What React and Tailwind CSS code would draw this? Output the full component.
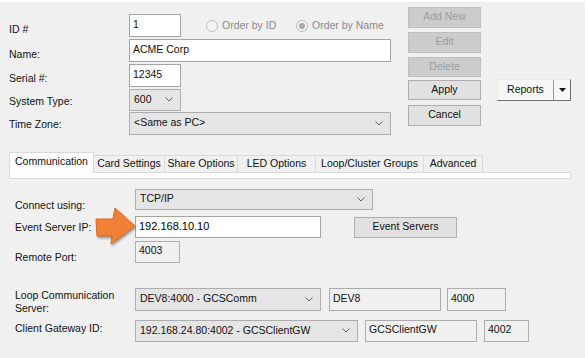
const Chevron = () => (
  <svg width="8" height="5" viewBox="0 0 8 5" className="shrink-0">
    <polyline points="0.5,0.5 4,4 7.5,0.5" fill="none" stroke="#606060" strokeWidth="1" />
  </svg>
);

const Select = ({ className, children }) => (
  <div className={`flex items-center justify-between border border-[#adadad] bg-[#e5e5e5] pl-[4px] pr-[7px] pb-[1px] ${className}`}>
    <span className="whitespace-nowrap">{children}</span>
    <Chevron />
  </div>
);

const Input = ({ className, ro, children }) => (
  <div
    className={`flex items-center border pl-[3px] pb-[2px] whitespace-nowrap ${
      ro ? "bg-[#f0f0f0] border-[#adadad]" : "bg-white border-[#a5a5a5]"
    } ${className}`}
  >
    {children}
  </div>
);

const Btn = ({ className, disabled, children }) => (
  <div
    className={`flex items-center justify-center border pb-[1px] ${
      disabled ? "bg-[#cccccc] border-[#bfbfbf] text-[#9d9d9d]" : "bg-[#e1e1e1] border-[#adadad] text-[#111]"
    } ${className}`}
  >
    {children}
  </div>
);

const Radio = ({ checked, label, className }) => (
  <div className={`flex items-center text-[#8a8a8a] ${className}`}>
    <div className="w-[12px] h-[12px] rounded-full border border-[#bcbcbc] bg-[#f4f4f4] flex items-center justify-center">
      {checked && <div className="w-[6px] h-[6px] rounded-full bg-[#a9a9a9]" />}
    </div>
    <span className="ml-[4px]">{label}</span>
  </div>
);

const Label = ({ className, children }) => (
  <div className={`w-[120px] shrink-0 leading-[13px] ${className}`}>{children}</div>
);

export default function App() {
  const tabs = [
    ["Card Settings", "w-[71px]"],
    ["Share Options", "w-[73px]"],
    ["LED Options", "w-[78px]"],
    ["Loop/Cluster Groups", "w-[108px]"],
    ["Advanced", "w-[59px]"],
  ];

  return (
    <div className="relative w-[588px] h-[358px] overflow-hidden bg-[#f0f0f0] border-t-2 border-r-[3px] border-white text-[10.5px] text-[#111] font-['Liberation_Sans',Arial,sans-serif]">
      {/* top form */}
      <div className="flex items-start">
        <div className="w-[391px] shrink-0 pl-[9px] mt-[12px]">
          <div className="flex items-center h-[23px]">
            <Label className="pt-[8px]">ID #</Label>
            <Input className="w-[52px] h-[23px]">1</Input>
            <Radio className="ml-[25px] w-[90px]" label="Order by ID" />
            <Radio checked label="Order by Name" />
          </div>
          <div className="flex items-center h-[23px] mt-[2px]">
            <Label className="pt-[8px]">Name:</Label>
            <Input className="w-[262px] h-[23px]">ACME Corp</Input>
          </div>
          <div className="flex items-center h-[23px] mt-[2px]">
            <Label className="pt-[6px]">Serial #:</Label>
            <Input className="w-[52px] h-[23px]">12345</Input>
          </div>
          <div className="flex items-center h-[22px] mt-[2px]">
            <Label className="pt-[2px]">System Type:</Label>
            <Select className="w-[52px] h-[22px]">600</Select>
          </div>
          <div className="flex items-center h-[23px] mt-[1px]">
            <Label className="pt-[2px]">Time Zone:</Label>
            <Select className="w-[262px] h-[23px]">&lt;Same as PC&gt;</Select>
          </div>
        </div>

        <div className="ml-[17px] mt-[5px] flex flex-col w-[73px]">
          <Btn disabled className="h-[21px]">Add New</Btn>
          <Btn disabled className="h-[21px] mt-[4px]">Edit</Btn>
          <Btn disabled className="h-[20px] mt-[4px]">Delete</Btn>
          <Btn className="h-[20px] mt-[3px]">Apply</Btn>
          <Btn className="h-[21px] mt-[5px]">Cancel</Btn>
        </div>

        <div className="ml-[16px] mt-[77px] flex w-[74px] h-[22px] bg-[#f7f7f7] border border-t-[#e8e8e8] border-l-[#e8e8e8] border-r-[#6f6f6f] border-b-[#6f6f6f]">
          <div className="w-[56px] flex items-center justify-center pb-[1px] border-r border-[#9a9a9a]">Reports</div>
          <div className="flex-1 flex items-center justify-center">
            <svg width="7" height="4" viewBox="0 0 7 4">
              <polygon points="0,0 7,0 3.5,4" fill="#111" />
            </svg>
          </div>
        </div>
      </div>

      {/* tabs */}
      <div className="ml-[9px] mt-[17px] w-[562px] flex items-end h-[21px]">
        <div className="w-[85px] h-[21px] bg-white border-l border-t border-r border-[#d9d9d9] flex items-center justify-center pb-[2px]">
          Communication
        </div>
        {tabs.map(([t, w]) => (
          <div
            key={t}
            className={`${w} h-[18px] border-t border-r border-b border-[#d9d9d9] flex items-center justify-center pb-[1px] whitespace-nowrap`}
          >
            {t}
          </div>
        ))}
        <div className="flex-1 border-b border-[#d9d9d9]" />
      </div>
      <div className="ml-[9px] w-[562px] h-[6px] bg-white border-x border-b border-[#d9d9d9]" />

      {/* communication page */}
      <div className="pl-[15px]">
        <div className="flex items-start h-[21px] mt-[10px]">
          <Label className="w-[118px] mt-[10px]">Connect using:</Label>
          <Select className="w-[238px] h-[21px]">TCP/IP</Select>
        </div>
        <div className="flex items-start h-[22px] mt-[6px]">
          <Label className="w-[118px] mt-[5px]">Event Server IP:</Label>
          <Input className="w-[186px] h-[22px] text-[11px] text-black">192.168.10.10</Input>
          <Btn className="ml-[33px] mt-[1px] w-[103px] h-[21px]">Event Servers</Btn>
        </div>
        <div className="flex items-start h-[22px] mt-[3px]">
          <Label className="w-[118px] mt-[10px]">Remote Port:</Label>
          <Input ro className="w-[45px] h-[22px]">4003</Input>
        </div>
        <div className="flex items-start h-[23px] mt-[25px]">
          <Label className="w-[118px] mt-[1px]">
            Loop Communication
            <br />
            Server:
          </Label>
          <Select className="w-[186px] h-[23px]">DEV8:4000 - GCSComm</Select>
          <Input ro className="ml-[8px] w-[112px] h-[23px]">DEV8</Input>
          <Input ro className="ml-[6px] w-[59px] h-[23px]">4000</Input>
        </div>
        <div className="flex items-start h-[22px] mt-[9px]">
          <Label className="w-[118px] mt-[2px]">Client Gateway ID:</Label>
          <Select className="w-[223px] h-[22px]">192.168.24.80:4002 - GCSClientGW</Select>
          <Input ro className="ml-[7px] w-[112px] h-[22px]">GCSClientGW</Input>
          <Input ro className="ml-[7px] w-[45px] h-[22px]">4002</Input>
        </div>
      </div>

      {/* orange callout arrow */}
      <svg
        width="50"
        height="46"
        viewBox="0 0 50 46"
        className="absolute left-[90px] top-[201px] drop-shadow-[1px_2px_1px_rgba(0,0,0,0.35)]"
      >
        <polygon
          points="6,16 23,16 25,5 45,23 21,41 22,33 7,33"
          fill="#ef8035"
          stroke="#d66a22"
          strokeWidth="1"
          strokeLinejoin="round"
        />
      </svg>
    </div>
  );
}
